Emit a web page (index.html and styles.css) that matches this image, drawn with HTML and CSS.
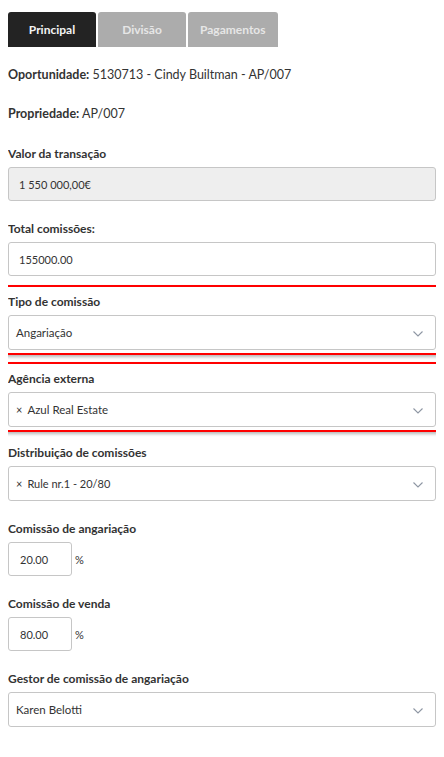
FILE: index.html
```html
<!DOCTYPE html>
<html lang="pt">
<head>
<meta charset="utf-8">
<link rel="stylesheet" href="styles.css">
</head>
<body>
<div class="tabs">
  <div class="tab active">Principal</div>
  <div class="tab">Divisão</div>
  <div class="tab">Pagamentos</div>
</div>

<p class="info first"><b>Oportunidade:</b> 5130713 - Cindy Builtman - AP/007</p>
<p class="info second"><b>Propriedade:</b> AP/007</p>

<div class="group">
  <div class="label">Valor da transação</div>
  <div class="input disabled">1 550 000,00€</div>
</div>

<div class="group before-box">
  <div class="label">Total comissões:</div>
  <div class="input">155000.00</div>
</div>

<div class="hl-frame hl-1">
  <div class="hl-inner">
    <div class="label">Tipo de comissão</div>
    <div class="select">
      <span class="value">Angariação</span>
      <svg class="chev" width="10" height="6" viewBox="0 0 10 6"><polyline points="0.5,0.5 5,5 9.5,0.5" fill="none" stroke="#8e96a3" stroke-width="1.1"/></svg>
    </div>
  </div>
</div>

<div class="hl-frame hl-2">
  <div class="hl-inner">
    <div class="label">Agência externa</div>
    <div class="select">
      <span class="value"><span class="x">×</span>Azul Real Estate</span>
      <svg class="chev" width="10" height="6" viewBox="0 0 10 6"><polyline points="0.5,0.5 5,5 9.5,0.5" fill="none" stroke="#8e96a3" stroke-width="1.1"/></svg>
    </div>
  </div>
</div>

<div class="group">
  <div class="label">Distribuição de comissões</div>
  <div class="select">
    <span class="value small"><span class="x">×</span>Rule nr.1 - 20/80</span>
    <svg class="chev" width="10" height="6" viewBox="0 0 10 6"><polyline points="0.5,0.5 5,5 9.5,0.5" fill="none" stroke="#8e96a3" stroke-width="1.1"/></svg>
  </div>
</div>

<div class="group">
  <div class="label">Comissão de angariação</div>
  <div class="pct-row">
    <div class="input pct">20.00</div>
    <span class="pct-sign">%</span>
  </div>
</div>

<div class="group">
  <div class="label">Comissão de venda</div>
  <div class="pct-row">
    <div class="input pct">80.00</div>
    <span class="pct-sign">%</span>
  </div>
</div>

<div class="group">
  <div class="label">Gestor de comissão de angariação</div>
  <div class="select">
    <span class="value">Karen Belotti</span>
    <svg class="chev" width="10" height="6" viewBox="0 0 10 6"><polyline points="0.5,0.5 5,5 9.5,0.5" fill="none" stroke="#8e96a3" stroke-width="1.1"/></svg>
  </div>
</div>
</body>
</html>
```

FILE: styles.css
```css
* { box-sizing: border-box; }

body {
  margin: 8px;
  font-family: Lato, "Open Sans", Arial, sans-serif;
  color: #333;
  background: #fff;
  font-size: 12px;
}

.tabs {
  display: flex;
  gap: 2px;
  margin-top: 4px;
}

.tab {
  min-width: 88px;
  height: 35px;
  padding: 0 12px;
  display: flex;
  align-items: center;
  justify-content: center;
  font-size: 12px;
  font-weight: 700;
  color: #e6e6e6;
  background: #acacac;
  border-radius: 3px 3px 0 0;
}

.tab.active {
  background: #232323;
  color: #f4f4f4;
}

.info {
  margin: 0;
  font-size: 12.5px;
  line-height: 18px;
}

.info b { font-weight: 700; }

.info.first { margin-top: 19px; margin-bottom: 21px; }
.info.second { margin-bottom: 22px; }

.group { margin-bottom: 19px; }
.group.before-box { margin-bottom: 9px; }

.label {
  font-size: 12px;
  font-weight: 700;
  line-height: 18px;
  margin-bottom: 4px;
  color: #333;
}

.input {
  height: 34px;
  border: 1px solid #c6c6c6;
  border-radius: 3px;
  padding: 0 10px;
  display: flex;
  align-items: center;
  font-size: 11px;
  background: #fff;
}

.input.disabled { background: #eeeeee; }

.select {
  height: 35px;
  border: 1px solid #c6c6c6;
  border-radius: 3px;
  padding: 0 12px 0 7px;
  display: flex;
  align-items: center;
  justify-content: space-between;
  font-size: 11.5px;
  background: #fff;
}

.select .value.small { font-size: 11px; }

.x {
  font-size: 11px;
  margin-right: 5px;
}

.chev { display: block; margin-top: 2px; }

.hl-frame {
  width: 436px;
  margin-left: -5px;
  background: #ff0000;
  padding: 2px;
  box-shadow: 2px 2px 3px rgba(0, 0, 0, 0.28);
}

.hl-inner {
  background: #fff;
  padding: 6px 1px 3px 3px;
}

.hl-1 { margin-bottom: 7px; }
.hl-2 { margin-bottom: 12px; }

.pct-row {
  display: flex;
  align-items: center;
  gap: 3px;
}

.input.pct {
  width: 64px;
  padding-left: 11px;
}

.pct-sign {
  font-size: 11px;
  font-weight: 400;
}
```
